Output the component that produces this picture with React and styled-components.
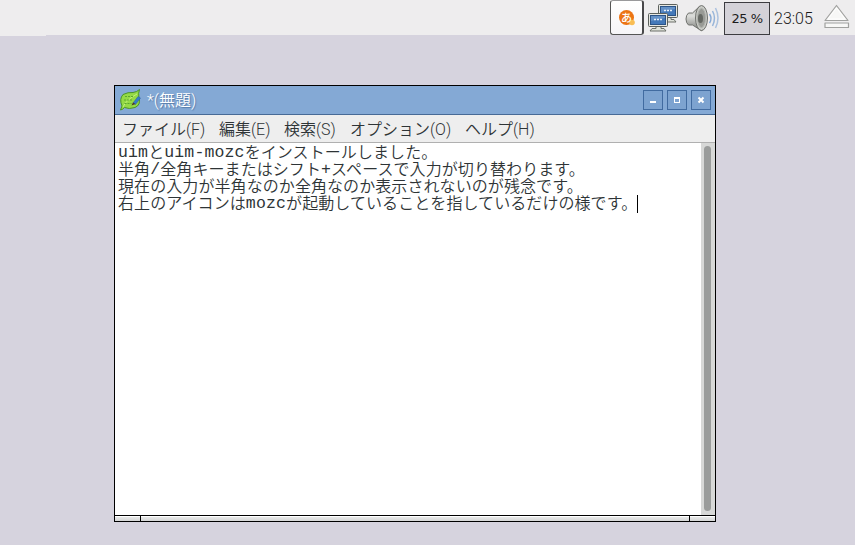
import React from 'react'
import styled, { createGlobalStyle } from 'styled-components'

const GlobalStyle = createGlobalStyle`
  body {
    margin: 0;
    background: #d6d3de;
    color: #2e3436;
    font-family: Roboto, 'Noto Sans CJK JP', sans-serif;
    font-weight: 350;
    font-size: 16px;
  }
`

const Desktop = styled.div`
  box-sizing: border-box;
  width: 855px;
  height: 545px;
  overflow: hidden;
  background: #d6d3de;
`

const Panel = styled.header`
  display: flex;
  justify-content: flex-end;
  align-items: flex-start;
  height: 36px;
  background: linear-gradient(#eeedee, #eeedee) 0 0 / 46px 36px no-repeat,
    linear-gradient(#eeedee, #eeedee) 0 0 / 100% 35px no-repeat;
`

const Tray = styled.div`
  display: flex;
  align-items: flex-start;
  svg {
    display: block;
  }
`

const InputMethod = styled.div`
  display: flex;
  align-items: center;
  justify-content: center;
  box-sizing: border-box;
  width: 34px;
  height: 35px;
  margin-right: 3px;
  border: 1px solid #555;
  border-right: 2px solid #48484a;
  border-top-color: #99999b;
  border-radius: 3px;
  background: linear-gradient(#ffffff, #f6f5f8);
`

const CpuMeter = styled.div`
  box-sizing: border-box;
  width: 46px;
  height: 33px;
  margin: 2px 0 0 5px;
  border: 1px solid #3c3c40;
  background: #d4d2d8;
  color: #1c1c1c;
  font: 400 13px/32px 'DejaVu Sans', sans-serif;
  letter-spacing: -0.5px;
  text-align: center;
`

const Clock = styled.time`
  width: 40px;
  margin: 0 10px 0 4px;
  color: #1a1a1a;
  line-height: 37px;
  white-space: nowrap;
`

const Window = styled.main`
  display: flex;
  flex-direction: column;
  box-sizing: border-box;
  width: 602px;
  height: 437px;
  margin: 49px 0 0 114px;
  border: 1px solid #000;
  background: #eeeeee;
`

const TitleBar = styled.div`
  display: flex;
  align-items: center;
  box-sizing: border-box;
  height: 29px;
  padding: 0 4px;
  border-bottom: 1px solid #476a96;
  background: #84a9d5;
`

const Title = styled.h1`
  flex: 1;
  margin: 0 0 0 5px;
  padding-top: 2px;
  color: #fff;
  font-size: 16px;
  font-weight: 350;
  line-height: 26px;
  text-shadow: 1px 1px 1px #567aa8;
`

const WindowButton = styled.button`
  display: flex;
  align-items: center;
  justify-content: center;
  box-sizing: border-box;
  width: 20px;
  height: 20px;
  margin-left: 4px;
  padding: 0;
  border: 1px solid #416ba0;
  background: #7da3d0;
`

const MenuBar = styled.nav`
  display: flex;
  gap: 14px;
  box-sizing: border-box;
  height: 28px;
  padding: 1px 0 0 7px;
  border-bottom: 1px solid #b0b0b0;
  background: #eeeeee;
  line-height: 27px;
`

const MenuItem = styled.span`
  width: ${props => props.$width}px;
  white-space: nowrap;
`

const Editor = styled.section`
  display: flex;
  height: 372px;
  background: #fff;
`

const Text = styled.div`
  flex: 1;
  padding: 1px 0 0 3px;
`

const Line = styled.p`
  display: flex;
  height: 17px;
  margin: 0;
  letter-spacing: 0.08px;
  line-height: 17px;
  white-space: pre;
`

const Mono = styled.span`
  font-family: 'Liberation Mono', monospace;
  font-size: 16.5px;
  font-weight: 400;
  letter-spacing: 0.15px;
`

const Caret = styled.i`
  width: 1px;
  height: 18px;
  background: #000;
`

const Scrollbar = styled.div`
  box-sizing: border-box;
  width: 14px;
  padding: 3px 3px 4px;
  background: #d7d8d7;
`

const Thumb = styled.div`
  width: 7px;
  height: 100%;
  border-radius: 4px;
  background: #9a9c9b;
`

const ResizeHandle = styled.div`
  display: flex;
  height: 5px;
  border-top: 1px solid #000;
  background: linear-gradient(#fff 1px, #e8e9e9 1px, #d5d6d6);
`

const Grip = styled.div`
  box-sizing: border-box;
  flex: 0 0 ${props => props.$width}px;
  border-right: ${props => (props.$last ? '0' : '1px solid #000')};
`

const MozcIcon = () => (
  <svg width="20" height="20" viewBox="0 0 20 20">
    <circle cx="9.500" cy="9.500" r="7.500" fill="#ec7414" />
    <circle cx="15" cy="14.500" r="2.800" fill="#f9bd55" />
    <text
      x="9.500"
      y="13.500"
      fill="#fff"
      fontFamily="Noto Sans CJK JP, sans-serif"
      fontSize="11"
      fontWeight="500"
      textAnchor="middle"
    >
      あ
    </text>
  </svg>
)

const Monitor = ({ x, y }) => (
  <g transform={`translate(${x} ${y})`}>
    <path d="M8 13h5v2.500h3l2 2.500H2l2-2.500h4z" fill="#dfe2da" stroke="#6c716a" />
    <rect x=".5" y=".5" width="19" height="13" rx="1" fill="#e7e8e2" stroke="#5b605c" />
    <rect x="2.500" y="2.500" width="15" height="9" fill="#4479b9" stroke="#2c5487" />
    <path d="M3 3h14v2L3 8z" fill="#79a2d1" opacity=".6" />
    <path d="M6 6.500h2m1 0h2m1 0h2" stroke="#e4edf8" strokeWidth="1.500" />
  </g>
)

const NetworkIcon = () => (
  <svg width="33" height="35" viewBox="0 0 33 35">
    <Monitor x={11} y={4} />
    <Monitor x={1} y={13} />
  </svg>
)

const VolumeIcon = () => (
  <svg width="39" height="35" viewBox="0 0 39 35">
    <defs>
      <linearGradient id="speaker" x2="0" y2="1">
        <stop stopColor="#b5b7b3" />
        <stop offset=".4" stopColor="#dcddda" />
        <stop offset="1" stopColor="#777975" />
      </linearGradient>
    </defs>
    <path
      d="M8.500 13h4L20 6l2 25-9.500-6h-4Q6 23 6 19t2.500-6z"
      fill="url(#speaker)"
      stroke="#70726e"
    />
    <ellipse cx="21.500" cy="18" rx="6" ry="12.500" fill="#c8cac5" stroke="#70726e" />
    <ellipse cx="21.500" cy="18" rx="4" ry="9.500" fill="#989a95" stroke="#aeb0ab" />
    <ellipse cx="20.500" cy="18.500" rx="2.500" ry="4.500" fill="#656863" />
    <g fill="none" stroke="#86a9d5" strokeWidth="1.500">
      <path d="M29.500 14q3 4.500 0 9" />
      <path d="M32.500 11q4 7 0 15" opacity=".85" />
      <path d="M35.500 8q5 10 0 20" opacity=".65" />
    </g>
  </svg>
)

const EjectIcon = () => (
  <svg width="31" height="35" viewBox="0 0 31 35">
    <g fill="#f7f7f6" stroke="#a0a19f" strokeWidth="1.200" strokeLinejoin="round">
      <path d="M12.500 5.500 24 20.500H1z" />
      <path d="M1 23h23.500v4.500H1z" />
    </g>
    <path d="m12.500 8 8.500 11H4z" fill="none" stroke="#fff" />
  </svg>
)

const LeafIcon = () => (
  <svg width="23" height="24" viewBox="0 0 23 24">
    <path
      d="M1.500 22L3 18Q0 11 4 6.500Q9 4 14 4.500Q18 4 20.500 1.500Q19 5 20 10Q22 17 16 19.500Q10 21.500 5.500 19.500Q4 21.500 1.500 22z"
      fill="#94da45"
      stroke="#4b9427"
      strokeLinejoin="round"
    />
    <path d="M4 19Q7 12 18 6" fill="none" stroke="#c1f17b" />
    <path d="M6 8.500h9M5 12h8M5.500 15.500h7" stroke="#5da630" strokeDasharray="2 1" />
    <path d="m14 15 5-6.500 2.500 1.500-5 6.500z" fill="#347bc9" stroke="#285d9e" strokeWidth=".5" />
    <path d="m12.500 17.500 1.500-3 2.500 1.500z" fill="#4c3529" />
  </svg>
)

const menus = [
  { label: 'ファイル(F)', width: 83 },
  { label: '編集(E)', width: 51 },
  { label: '検索(S)', width: 52 },
  { label: 'オプション(O)', width: 101 },
  { label: 'ヘルプ(H)', width: 70 },
]

const App = () => {
  return (
    <Desktop>
      <GlobalStyle />
      <Panel>
        <Tray>
          <InputMethod>
            <MozcIcon />
          </InputMethod>
          <NetworkIcon />
          <VolumeIcon />
          <CpuMeter>25 %</CpuMeter>
          <Clock>23:05</Clock>
          <EjectIcon />
        </Tray>
      </Panel>
      <Window>
        <TitleBar>
          <LeafIcon />
          <Title>*(無題)</Title>
          <WindowButton aria-label="minimize">
            <svg width="12" height="12">
              <path d="M3 8h6" stroke="#fff" strokeWidth="2" />
            </svg>
          </WindowButton>
          <WindowButton aria-label="maximize">
            <svg width="12" height="12">
              <path d="M3.500 4v5M8.500 4v5M3 8.500h6" fill="none" stroke="#fff" />
              <path d="M3 4h6" stroke="#fff" strokeWidth="2" />
            </svg>
          </WindowButton>
          <WindowButton aria-label="close">
            <svg width="12" height="12">
              <path d="m3.500 3.500 5 5m0-5-5 5" stroke="#fff" strokeWidth="2" />
            </svg>
          </WindowButton>
        </TitleBar>
        <MenuBar>
          {menus.map(menu => (
            <MenuItem key={menu.label} $width={menu.width}>
              {menu.label}
            </MenuItem>
          ))}
        </MenuBar>
        <Editor>
          <Text>
            <Line>
              <Mono>uim</Mono>と<Mono>uim-mozc</Mono>をインストールしました。
            </Line>
            <Line>
              半角<Mono>/</Mono>全角キーまたはシフト<Mono>+</Mono>
              スペースで入力が切り替わります。
            </Line>
            <Line>現在の入力が半角なのか全角なのか表示されないのが残念です。</Line>
            <Line>
              右上のアイコンは<Mono>mozc</Mono>
              が起動していることを指しているだけの様です。
              <Caret />
            </Line>
          </Text>
          <Scrollbar>
            <Thumb />
          </Scrollbar>
        </Editor>
        <ResizeHandle>
          <Grip $width={26} />
          <Grip $width={549} />
          <Grip $width={25} $last />
        </ResizeHandle>
      </Window>
    </Desktop>
  )
}

export default App
